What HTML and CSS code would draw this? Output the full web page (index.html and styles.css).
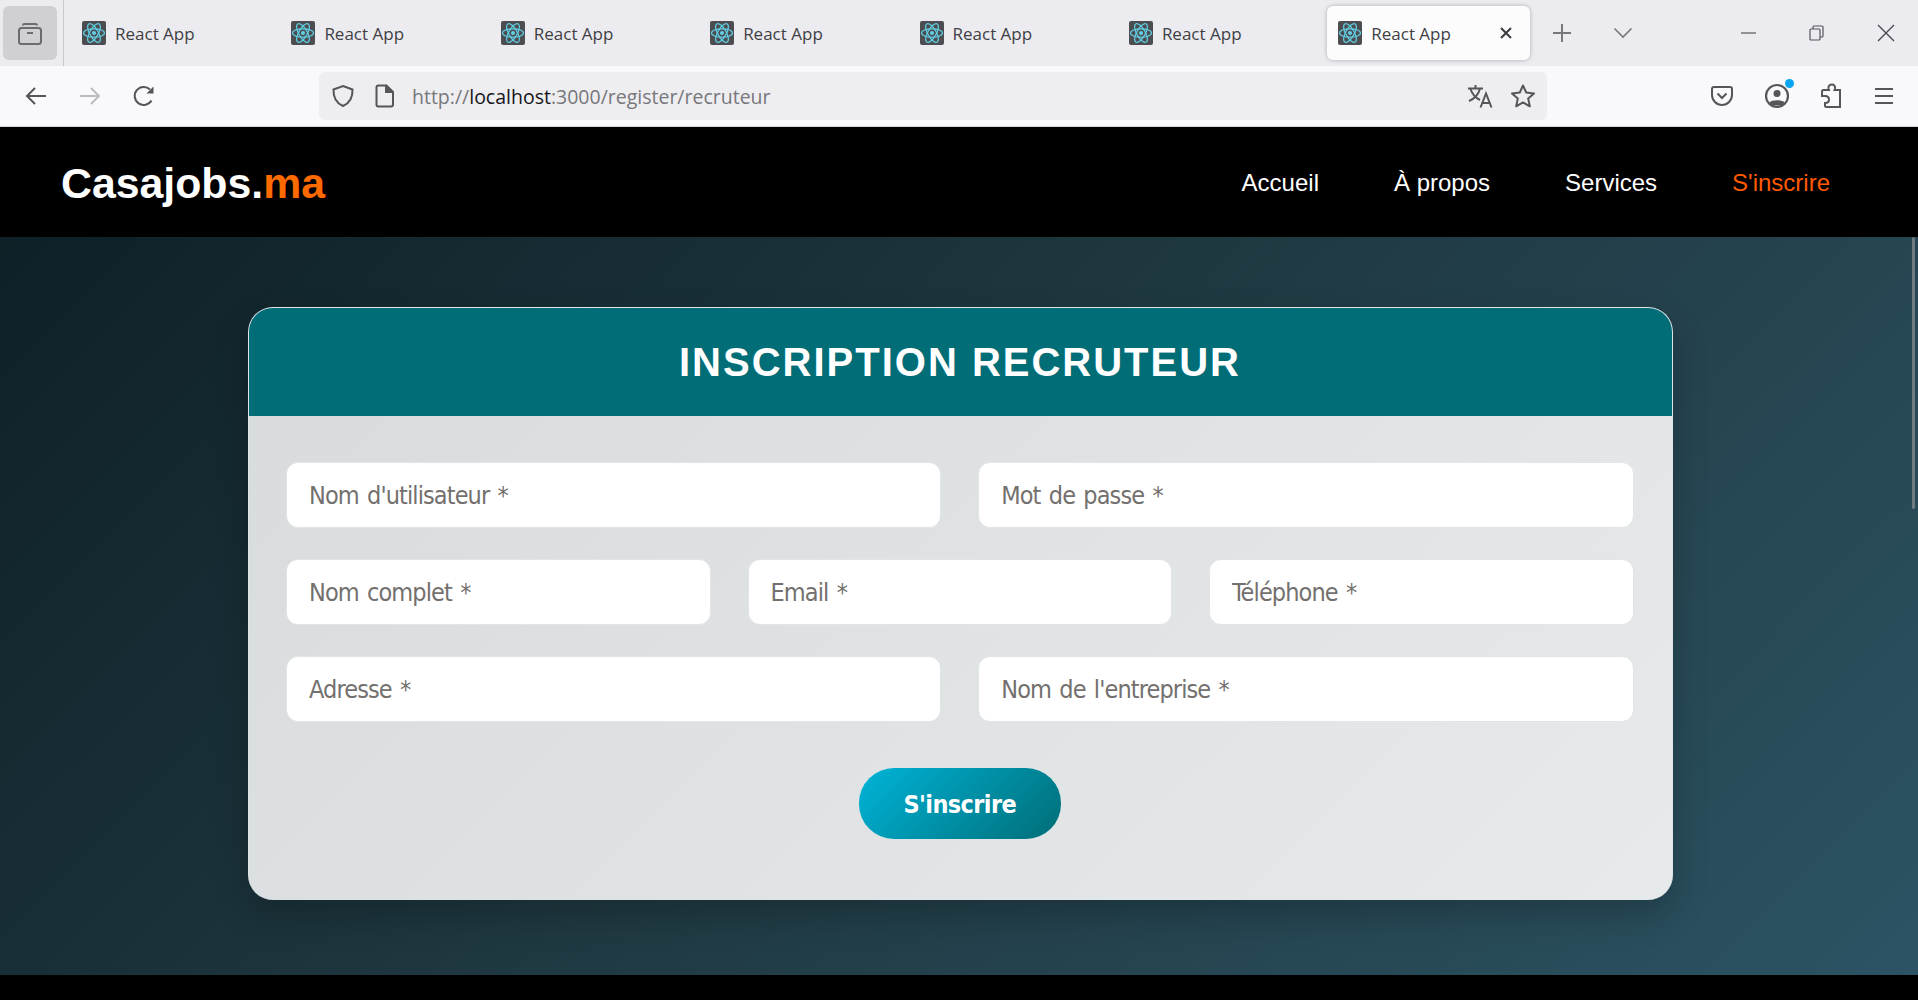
FILE: index.html
```html
<!DOCTYPE html>
<html lang="fr">
<head>
<meta charset="utf-8">
<title>React App</title>
<link rel="stylesheet" href="styles.css">
</head>
<body>
<svg class="defs" width="0" height="0" aria-hidden="true">
  <symbol id="react" viewBox="0 0 24 24">
    <rect width="24" height="24" rx="2" fill="#4b4d50"/>
    <g fill="none" stroke="#61cfe4" stroke-width="1.2">
      <ellipse cx="12" cy="12" rx="10.5" ry="4.2"/>
      <ellipse cx="12" cy="12" rx="10.5" ry="4.2" transform="rotate(60 12 12)"/>
      <ellipse cx="12" cy="12" rx="10.5" ry="4.2" transform="rotate(120 12 12)"/>
    </g>
    <circle cx="12" cy="12" r="2.1" fill="#61cfe4"/>
  </symbol>
</svg>

<div class="tabbar">
  <div class="tab-tools">
    <button class="tool-box">
      <svg width="24" height="24" viewBox="0 0 24 24" fill="none" stroke="#6b6b70" stroke-width="2"><path d="M5 4.5c0-1 .6-1.5 1.5-1.5h11c.9 0 1.5.5 1.5 1.5"/><rect x="1" y="7" width="22" height="16" rx="2.5"/><path d="M9 12h6"/></svg>
    </button>
  </div>
  <div class="tabs">
    <div class="tab"><svg class="fav"><use href="#react"/></svg><span>React App</span></div>
    <div class="tab"><svg class="fav"><use href="#react"/></svg><span>React App</span></div>
    <div class="tab"><svg class="fav"><use href="#react"/></svg><span>React App</span></div>
    <div class="tab"><svg class="fav"><use href="#react"/></svg><span>React App</span></div>
    <div class="tab"><svg class="fav"><use href="#react"/></svg><span>React App</span></div>
    <div class="tab"><svg class="fav"><use href="#react"/></svg><span>React App</span></div>
    <div class="tab tab-active"><svg class="fav"><use href="#react"/></svg><span>React App</span>
      <svg class="tab-close" width="14" height="14" viewBox="0 0 14 14" stroke="#3a3a40" stroke-width="2"><path d="M2 2l10 10M12 2L2 12"/></svg>
    </div>
  </div>
  <svg class="new-tab" width="20" height="20" viewBox="0 0 20 20" stroke="#77777c" stroke-width="2"><path d="M10 1v18M1 10h18"/></svg>
  <svg class="tab-list" width="20" height="12" viewBox="0 0 20 12" fill="none" stroke="#77777c" stroke-width="1.6"><path d="M1.5 1.5L10 10l8.500-8.500"/></svg>
  <div class="win-controls">
    <svg width="16" height="16" viewBox="0 0 16 16" stroke="#55555a" stroke-width="1.2"><path d="M0 8h15"/></svg>
    <svg width="16" height="16" viewBox="0 0 16 16" fill="none" stroke="#55555a" stroke-width="1.2"><rect x="1" y="4" width="10" height="11" rx="1"/><path d="M4 4V2c0-.6.4-1 1-1h8c.6 0 1 .4 1 1v9c0 .6-.4 1-1 1h-2"/></svg>
    <svg width="18" height="18" viewBox="0 0 18 18" stroke="#44444a" stroke-width="1.300"><path d="M1 1l16 16M17 1L1 17"/></svg>
  </div>
</div>

<div class="toolbar">
  <div class="nav-btns">
    <svg width="22" height="20" viewBox="0 0 22 20" fill="none" stroke="#55555b" stroke-width="2"><path d="M21 10H2M10 2l-8 8 8 8"/></svg>
    <svg width="22" height="20" viewBox="0 0 22 20" fill="none" stroke="#bcbcc0" stroke-width="2"><path d="M1 10h19M12 2l8 8-8 8"/></svg>
    <svg width="22" height="22" viewBox="0 0 22 22" fill="none" stroke="#55555b" stroke-width="2"><path d="M18.500 15.500A9 9 0 1 1 17 4.500"/><path d="M20.500 1.500v7h-7z" fill="#55555b" stroke="none"/></svg>
  </div>
  <div class="urlbar">
    <svg class="url-shield" width="24" height="24" viewBox="0 0 24 24" fill="none" stroke="#55555b" stroke-width="2"><path d="M12 2l9.500 3.500c.3 8-2.500 13.500-9.500 16.500C5 19 2.200 13.500 2.500 5.500z"/></svg>
    <svg class="url-page" width="20" height="24" viewBox="0 0 20 24" fill="none" stroke="#55555b" stroke-width="2"><path d="M3.500 1.500h8L18 8v12.500c0 1.200-.8 2-2 2H3.500c-1.200 0-2-.8-2-2v-17c0-1.200.8-2 2-2z"/><path d="M11 1.500V8h7" fill="#55555b"/></svg>
    <div class="url-text">http://<b>localhost</b>:3000/register/recruteur</div>
    <svg class="url-translate" width="26" height="24" viewBox="0 0 26 24" fill="none" stroke="#55555b" stroke-width="2"><path d="M1 4.500h15M8.500 1v3.500M13 4.500c-1.500 6-5 10-11 12.500M3.500 5c2 6 5.500 9 9.500 11"/><path d="M13.500 23.500L19 9.500l5.500 14M15.500 19h7.500"/></svg>
    <svg class="url-star" width="26" height="26" viewBox="0 0 26 26" fill="none" stroke="#55555b" stroke-width="2" stroke-linejoin="round"><path d="M13 2.500l3.200 7 7.800.9-5.800 5.200 1.600 7.700L13 19.400l-6.800 3.900 1.600-7.700L2 10.400l7.800-.9z"/></svg>
  </div>
  <div class="tool-icons">
    <svg width="22" height="22" viewBox="0 0 22 22" fill="none" stroke="#55555b" stroke-width="2"><path d="M3 2h16c1 0 2 .8 2 2v6c0 5.500-4.500 10-10 10S1 15.500 1 10V4c0-1.200 1-2 2-2z"/><path d="M6.500 8.500L11 13l4.500-4.500"/></svg>
    <div class="account">
      <svg width="24" height="26" viewBox="0 0 24 26" fill="none" stroke="#55555b" stroke-width="2.200"><circle cx="12" cy="13" r="11"/><circle cx="12" cy="10.500" r="3.500" fill="#55555b" stroke="none"/><path d="M4.500 19.500c2-3 13-3 15 0l-2 3h-11z" fill="#55555b" stroke="none"/></svg>
      <span class="account-dot"></span>
    </div>
    <svg width="22" height="26" viewBox="0 0 22 26" fill="none" stroke="#55555b" stroke-width="2"><path d="M12 1.500c2 0 3.500 1.500 3 4l-.5 1.500H20v17H6.500c-1 0-1.500-.5-1.500-1.500V20c2.500 0 4-1.500 4-3.500S7.500 13 5 13h-3V8.500C2 7.500 2.500 7 3.500 7H9l-.5-1.500c-.5-2.500 1.500-4 3.500-4z"/></svg>
    <svg width="20" height="18" viewBox="0 0 20 18" stroke="#55555b" stroke-width="2"><path d="M1 2h18M1 9h18M1 16h18"/></svg>
  </div>
</div>

<header class="site-nav">
  <a class="logo">Casajobs.<span>ma</span></a>
  <nav class="nav-links">
    <a>Accueil</a>
    <a>À propos</a>
    <a>Services</a>
    <a class="current">S'inscrire</a>
  </nav>
</header>

<main class="page">
  <section class="card">
    <h1 class="card-title">INSCRIPTION RECRUTEUR</h1>
    <form class="form">
      <div class="row row-2">
        <input class="field" placeholder="Nom d'utilisateur *">
        <input class="field" placeholder="Mot de passe *">
      </div>
      <div class="row row-3">
        <input class="field" placeholder="Nom complet *">
        <input class="field" placeholder="Email *">
        <input class="field" placeholder="Téléphone *">
      </div>
      <div class="row row-2">
        <input class="field" placeholder="Adresse *">
        <input class="field" placeholder="Nom de l'entreprise *">
      </div>
      <button class="submit" type="button">S'inscrire</button>
    </form>
  </section>
  <div class="scroll-thumb"></div>
</main>
<footer class="site-footer"></footer>
</body>
</html>
```
FILE: styles.css
```css
* { box-sizing: border-box; }
html, body { margin: 0; height: 1000px; overflow: hidden; }
body {
  display: flex;
  flex-direction: column;
  font-family: "Liberation Sans", Arial, sans-serif;
  background: #000;
}
.defs { position: absolute; }

/* browser chrome */
.tabbar {
  height: 66px;
  flex: none;
  display: flex;
  align-items: center;
  background: #ecebf0;
  font-family: "Open Sans", "Noto Sans", sans-serif;
}
.tab-tools {
  width: 64px;
  height: 66px;
  flex: none;
  border-right: 1px solid #c9c9ce;
  padding: 6px 0 0 3px;
}
.tool-box {
  width: 54px;
  height: 54px;
  border: 0;
  border-radius: 6px;
  background: #cfcfd4;
  display: flex;
  align-items: center;
  justify-content: center;
  padding: 0;
}
.tabs {
  display: flex;
  padding-left: 7px;
  flex: none;
}
.tab {
  width: 203px;
  height: 54px;
  margin-right: 6.380px;
  padding-left: 11px;
  display: flex;
  align-items: center;
  border-radius: 6px;
  font-size: 17px;
  color: #3f3f44;
  white-space: nowrap;
}
.tab-active {
  position: relative;
  background: #fcfcfd;
  box-shadow: 0 0 4px rgba(0, 0, 0, .28);
  margin-right: 0;
}
.fav { width: 24px; height: 24px; margin-right: 9px; flex: none; }
.tab-close { margin-left: auto; margin-right: 17px; }
.new-tab { margin-left: 22px; flex: none; }
.tab-list { margin-left: 41px; flex: none; }
.win-controls {
  margin-left: auto;
  display: flex;
  align-items: center;
  gap: 52px;
  padding-right: 23px;
}

.toolbar {
  height: 61px;
  flex: none;
  display: flex;
  align-items: center;
  padding-bottom: 1px;
  background: #f9f9fb;
  border-bottom: 1px solid #d4d4d8;
}
.nav-btns {
  display: flex;
  align-items: center;
  gap: 32px;
  padding-left: 25px;
  width: 319px;
  flex: none;
}
.urlbar {
  width: 1228px;
  height: 48px;
  flex: none;
  display: flex;
  align-items: center;
  border-radius: 6px;
  background: #eeeef0;
  padding: 0 11px 0 12px;
  font-family: "Open Sans", "Noto Sans", sans-serif;
}
.url-page { margin-left: 20px; }
.url-text {
  margin-left: 17px;
  padding-top: 2px;
  font-size: 19.500px;
  color: #77777c;
  white-space: nowrap;
}
.url-text b { font-weight: 400; color: #15141a; }
.url-translate { margin-left: auto; }
.url-star { margin-left: 17px; }
.tool-icons {
  flex: 1;
  display: flex;
  align-items: center;
  gap: 31.500px;
  padding-left: 164px;
}
.account { position: relative; height: 26px; }
.account-dot {
  position: absolute;
  top: -4px;
  right: -5px;
  width: 9px;
  height: 9px;
  border-radius: 50%;
  background: #0aa5f0;
}

/* site */
.site-nav {
  height: 110px;
  flex: none;
  background: #000;
  display: flex;
  align-items: center;
  justify-content: space-between;
  padding: 2px 88px 0 61px;
}
.logo {
  font-size: 42.800px;
  font-weight: 700;
  color: #fff;
}
.logo span { color: #ff6a00; }
.nav-links {
  display: flex;
  gap: 75px;
  font-size: 24px;
  color: #fff;
}
.nav-links .current { color: #ff5a00; }

.page {
  position: relative;
  flex: 1;
  background: linear-gradient(135deg, #0f2027 0%, #203a43 50%, #2c5364 100%);
  padding: 70px 0 0 2px;
}
.scroll-thumb {
  position: absolute;
  top: 0;
  right: 3px;
  width: 3px;
  height: 272px;
  background: #6f7b80;
  border-radius: 2px;
}
.site-footer { height: 25px; flex: none; background: #000; }

.card {
  width: 1425px;
  height: 593px;
  margin: 0 auto;
  border-radius: 25px;
  overflow: hidden;
  background: linear-gradient(135deg, #d8dbdd 0%, #e7eaeb 100%);
  border: 1px solid #dfe5e7;
  border-bottom: 0;
  box-shadow: 0 15px 35px rgba(0, 0, 0, .22);
}
.card-title {
  margin: 0;
  height: 108px;
  display: flex;
  align-items: center;
  justify-content: center;
  background: #006d77;
  color: #fff;
  font-size: 40px;
  font-weight: 700;
  letter-spacing: 2px;
}
.form {
  display: flex;
  flex-direction: column;
  gap: 31.500px;
  padding: 46px 38px 0 37.500px;
}
.row { display: grid; gap: 37px; }
.row-2 { grid-template-columns: 1fr 1fr; }
.row-3 { grid-template-columns: 1fr 1fr 1fr; }
.field {
  height: 65.500px;
  width: 100%;
  padding: 2px 22px 0;
  border: 1px solid #e2e4e6;
  border-radius: 12px;
  background: #fff;
  outline: 0;
  font-family: "DejaVu Sans Condensed", "DejaVu Sans", sans-serif;
  font-size: 25px;
  letter-spacing: -.9px;
  word-spacing: 2px;
  color: #333;
}
.field::placeholder { color: #73706e; opacity: 1; }
.submit {
  align-self: center;
  width: 202px;
  height: 71px;
  margin-top: 14.500px;
  padding: 2px 0 0;
  border: 0;
  border-radius: 35px;
  background: linear-gradient(135deg, #00b4d8 0%, #006d77 100%);
  color: #fff;
  font-family: "DejaVu Sans Condensed", "DejaVu Sans", sans-serif;
  font-size: 25px;
  font-weight: 700;
  letter-spacing: -.6px;
}
```
